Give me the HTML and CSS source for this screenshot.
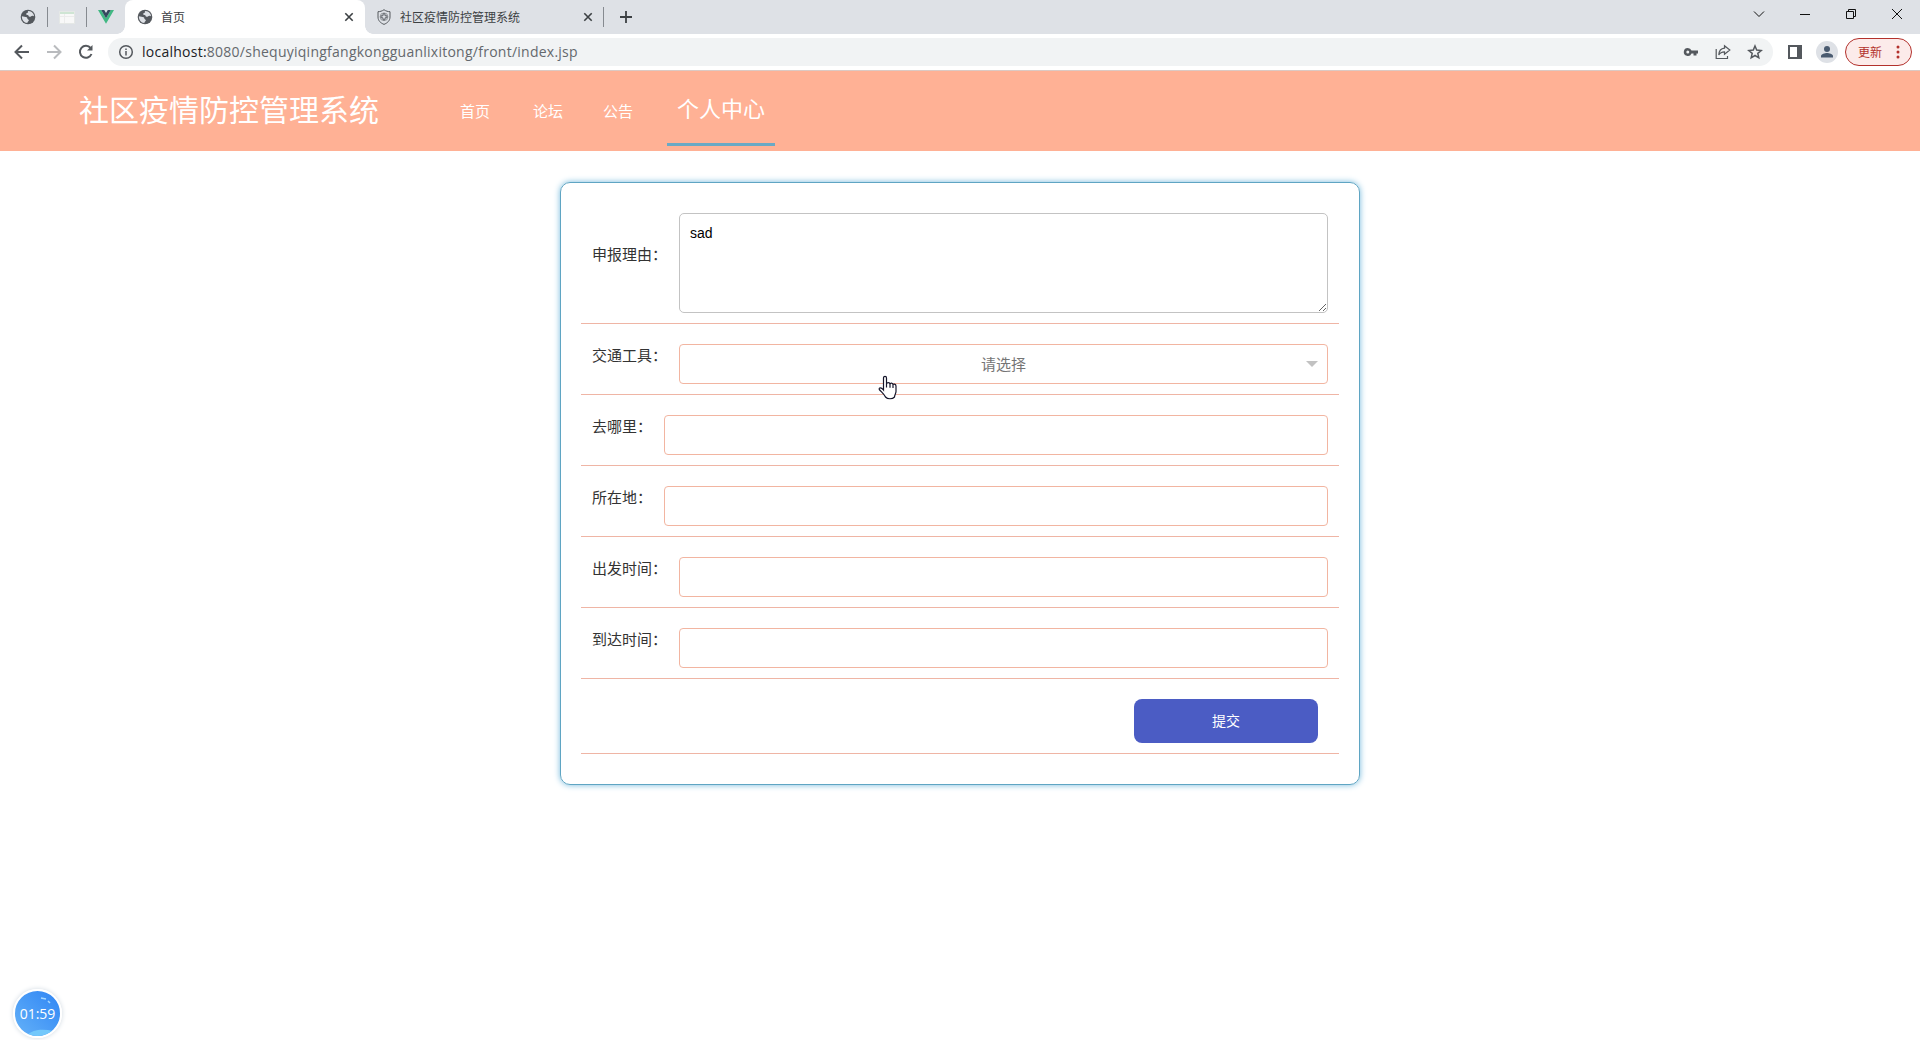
FILE: index.html
```
<!DOCTYPE html>
<html lang="zh">

<head>
    <meta charset="utf-8">
    <meta name="viewport" content="width=device-width, initial-scale=1" />
    <title>首页</title>
    <link rel="stylesheet" href="styles.css">
</head>

<body>
    <svg class="defs">
        <symbol id="globe" viewBox="0 0 16 16">
            <circle cx="8" cy="8" r="7.3" fill="#54585d" />
            <path d="M7.6 2.2C9 3 7.4 4 6.3 4.4 5.7 5 6.4 5.8 7.6 5.9 9 6 8.2 7.6 9.6 7.8 11 8 11.3 6.6 12.8 6.8L14 7.2C14 4.4 11.6 2 8.6 1.9ZM1.9 7.2C3.4 7.7 5.6 7.6 6.7 8.3 7.8 9 6.9 10 8.2 10.5 9.2 10.9 9 12 8 12.4L7.2 14C4.2 13.8 1.8 11 1.9 7.2Z" fill="#dee1e6" />
        </symbol>
        <symbol id="close" viewBox="0 0 10 10">
            <path d="M1.3 1.3L8.7 8.7M8.7 1.3L1.3 8.7" stroke="#3c4043" stroke-width="1.6" />
        </symbol>
    </svg>

    <!-- tabs -->
    <div class="tabs">
        <div class="pin"><svg width="16" height="16"><use href="#globe" /></svg></div>
        <div class="line"></div>
        <div class="pin">
            <svg width="16" height="13" viewBox="0 0 16 13">
                <rect x=".5" y=".5" width="15" height="12" fill="#f8f8f8" stroke="#e5e8e6" />
                <path d="M1 2H15" stroke="#cfe5d4" stroke-width="2" />
                <path d="M1 5.5H15M5.5 3V12" stroke="#ececec" />
            </svg>
        </div>
        <div class="line"></div>
        <div class="pin">
            <svg width="16" height="14" viewBox="0 0 16 14">
                <path d="M0 0H3.2L8 8.3 12.8 0H16L8 13.8Z" fill="#41b883" />
                <path d="M3.2 0H6.2L8 3.1 9.8 0H12.8L8 8.3Z" fill="#35495e" />
            </svg>
        </div>
        <div class="tab active">
            <svg width="16" height="16"><use href="#globe" /></svg>
            <span>首页</span>
            <svg class="close" width="10" height="10"><use href="#close" /></svg>
        </div>
        <div class="tab">
            <svg width="16" height="16" viewBox="0 0 16 16" fill="none" stroke="#54585d">
                <path d="M8 .7C10 2.2 12 2.6 14 2.7V8C14 11.8 11.3 14 8 15.4 4.7 14 2 11.8 2 8V2.7C4 2.6 6 2.2 8 .7Z" />
                <path d="M7 4.8H9V6.8H11V8.8H9V10.8H7V8.8H5V6.8H7Z" stroke-width=".9" />
                <circle cx="8" cy="7.8" r="3.9" stroke-width=".5" />
            </svg>
            <span>社区疫情防控管理系统</span>
            <svg class="close" width="10" height="10"><use href="#close" /></svg>
        </div>
        <div class="line"></div>
        <svg class="plus" width="12" height="12" viewBox="0 0 12 12"><path d="M6 0V12M0 6H12" stroke="#3c4043" stroke-width="1.8" /></svg>
        <div class="win">
            <svg width="12" height="12" viewBox="0 0 12 12"><path d="M1 3.5L6 8.5 11 3.5" /></svg>
            <svg width="12" height="12" viewBox="0 0 12 12"><path d="M1 6.5H11" /></svg>
            <svg width="12" height="12" viewBox="0 0 12 12"><path d="M1.5 3.5H8.5V10.5H1.5ZM3.5 3.5V1.5H10.5V8.5H8.5" /></svg>
            <svg width="12" height="12" viewBox="0 0 12 12"><path d="M1 1L11 11M11 1L1 11" /></svg>
        </div>
    </div>

    <!-- address bar -->
    <div class="bar">
        <div class="btns">
            <svg width="16" height="16" viewBox="0 0 16 16" stroke="#54585d"><path d="M15 8H2M8 1.5L1.5 8 8 14.5" /></svg>
            <svg width="16" height="16" viewBox="0 0 16 16" stroke="#b9bbbe"><path d="M1 8H14M8 1.5L14.5 8 8 14.5" /></svg>
            <svg width="16" height="16" viewBox="0 0 16 16" stroke="#54585d"><path d="M13.5 10A6 6 0 1 1 12.6 4" /><path d="M14.5 1V6.5H9Z" fill="#54585d" stroke="none" /></svg>
        </div>
        <div class="url">
            <svg width="16" height="16" viewBox="0 0 16 16" fill="none" stroke="#54585d" stroke-width="1.5">
                <circle cx="8" cy="8" r="6.3" />
                <path d="M8 7V11.5M8 4.5V6" />
            </svg>
            <p><b>localhost:</b>8080/shequyiqingfangkongguanlixitong/front/index.jsp</p>
            <div class="urlIcons">
                <svg width="16" height="16" viewBox="0 0 16 16"><path fill-rule="evenodd" d="M4.8 4A4 4 0 1 0 8.5 9.5H10.5V11.5H13.5V9.5H15V6.5H8.5A4 4 0 0 0 4.8 4ZM4.8 6.5A1.5 1.5 0 1 1 4.8 9.5 1.5 1.5 0 0 1 4.8 6.5Z" fill="#54585d" /></svg>
                <svg width="16" height="16" viewBox="0 0 16 16" fill="none" stroke="#54585d" stroke-width="1.2"><path d="M1.2 5V14.5H12.5V12" /><path d="M9.5 1.8L14.8 6 9.5 10.2V7.8C7 7.8 5 8.7 3.8 11 4 7 6 4.5 9.5 4.2Z" /></svg>
                <svg width="16" height="16" viewBox="0 0 16 16" fill="none" stroke="#54585d" stroke-width="1.5"><path d="M8 2L9.7 6.1 14.2 6.5 10.8 9.4 11.8 13.8 8 11.5 4.2 13.8 5.2 9.4 1.8 6.5 6.3 6.1Z" /></svg>
            </div>
        </div>
        <svg class="side" width="14" height="14" viewBox="0 0 14 14"><path d="M1 1H13V13H1Z" fill="#fff" stroke="#54585d" stroke-width="2" /><path d="M9 1H13V13H9Z" fill="#54585d" /></svg>
        <div class="user">
            <svg width="14" height="14" viewBox="0 0 14 14" fill="#4a5b70"><circle cx="7" cy="4" r="3" /><path d="M1 12.5V11C1 9 5 8 7 8S13 9 13 11V12.5Z" /></svg>
        </div>
        <div class="update">
            <span>更新</span>
            <svg width="4" height="14" viewBox="0 0 4 14" fill="#b3312c"><circle cx="2" cy="2" r="1.5" /><circle cx="2" cy="7" r="1.5" /><circle cx="2" cy="12" r="1.5" /></svg>
        </div>
    </div>

    <!-- nav -->
    <div class="header">
        <h1>社区疫情防控管理系统</h1>
        <a href="#">首页</a>
        <a href="#">论坛</a>
        <a href="#">公告</a>
        <a class="this" href="#">个人中心</a>
    </div>

    <form class="box">
        <div class="row rowArea">
            <label>申报理由：</label>
            <textarea>sad</textarea>
        </div>
        <div class="row">
            <label>交通工具：</label>
            <div class="select">请选择</div>
        </div>
        <div class="row">
            <label>去哪里：</label>
            <input type="text">
        </div>
        <div class="row">
            <label>所在地：</label>
            <input type="text">
        </div>
        <div class="row">
            <label>出发时间：</label>
            <input type="text">
        </div>
        <div class="row">
            <label>到达时间：</label>
            <input type="text">
        </div>
        <div class="row rowBtn">
            <button type="button">提交</button>
        </div>
    </form>

    <!-- mouse pointer -->
    <svg class="hand" width="20" height="26" viewBox="0 0 20 26">
        <path d="M5.5 15V3C5.5 .7 8.5 .7 8.5 3V9.5C8.5 7 12 7 12 9.5 12 7.5 15 7.8 15 10 15 8.5 18 8.8 18 11V16.5C18 18.5 16.5 20 16.5 22 14.5 24.3 9.5 24.3 7.5 22 6.5 19.5 3.5 17 1.3 14.5 .7 12.5 3 11.8 5.5 15ZM8.5 9V12.5M12 9.5V12.8M15 10V13" fill="#fff" stroke="#15152a" stroke-width="1.2" />
    </svg>

    <!-- recording time -->
    <div class="timer">
        <span>01:59</span>
        <svg width="45" height="45" viewBox="0 0 45 45">
            <path d="M11 45C18 38 28 38 38 40L34 45Z" fill="#72c8fb" />
            <path d="M26 7L31 8M33 10L35 12" stroke="#a6d8ff" stroke-width="1.5" />
        </svg>
    </div>
</body>

</html>
```
FILE: styles.css
```
* {
    box-sizing: border-box;
}

body {
    margin: 0;
    height: 1040px;
    overflow: hidden;
    background: #fff;
    color: #333;
    font-family: "Open Sans", "Noto Sans CJK SC", sans-serif;
}

svg {
    display: block;
    flex: none;
}

.defs {
    position: absolute;
    width: 0;
    height: 0;
}

/* tabs */
.tabs {
    display: flex;
    align-items: center;
    height: 34px;
    padding-left: 8px;
    background: #dee1e6;
}

.pin {
    display: flex;
    justify-content: center;
    width: 39px;
}

.line {
    width: 1px;
    height: 20px;
    background: #868a90;
}

.line + .pin {
    width: 38px;
}

.tab {
    display: flex;
    align-items: center;
    position: relative;
    width: 238px;
    height: 34px;
    padding: 0 10px 0 11px;
    font-size: 12px;
    color: #3c4043;
}

.tab span {
    flex: 1;
    margin-left: 8px;
}

.active {
    width: 240px;
    padding: 0 11px 0 12px;
    background: #fff;
    border-radius: 8px 8px 0 0;
}

.active::before,
.active::after {
    content: "";
    position: absolute;
    bottom: 0;
    left: -8px;
    width: 8px;
    height: 8px;
    background: radial-gradient(circle at 0 0, #dee1e6 7.5px, #fff 8px);
}

.active::after {
    left: 240px;
    background: radial-gradient(circle at 8px 0, #dee1e6 7.5px, #fff 8px);
}

.plus {
    margin-left: 16px;
}

.win {
    display: flex;
    gap: 34px;
    margin: 0 17px 6px auto;
    fill: none;
    stroke: #111;
}

/* address bar */
.bar {
    display: flex;
    align-items: center;
    height: 37px;
    padding: 0 8px 1px 14px;
    border-bottom: 1px solid #dcc9c3;
}

.btns {
    display: flex;
    gap: 16px;
    width: 94px;
    fill: none;
    stroke-width: 2;
}

.url {
    display: flex;
    align-items: center;
    width: 1665px;
    height: 28px;
    padding: 0 10px;
    border-radius: 14px;
    background: #f1f3f4;
}

.url p {
    flex: 1;
    margin: 0 0 0 8px;
    font-size: 14px;
    letter-spacing: .25px;
    color: #64686d;
}

.url b {
    font-weight: normal;
    color: #202124;
}

.urlIcons {
    display: flex;
    gap: 16px;
}

.side {
    margin-left: 15px;
}

.user {
    display: flex;
    align-items: center;
    justify-content: center;
    width: 22px;
    height: 22px;
    margin: 0 7px 0 14px;
    border-radius: 50%;
    background: #dee1e6;
}

.update {
    display: flex;
    align-items: center;
    justify-content: space-between;
    width: 67px;
    height: 28px;
    padding: 0 11px 0 12px;
    border: 1px solid #b3312c;
    border-radius: 14px;
    background: #fcebea;
    color: #b3312c;
    font-size: 12px;
}

/* nav */
.header {
    display: flex;
    height: 80px;
    padding-left: 79px;
    background: #ffb195;
    line-height: 80px;
}

.header h1 {
    width: 381px;
    margin: 0;
    font-size: 30px;
    font-weight: normal;
    line-height: 78px;
    color: #fff;
}

.header a {
    margin-right: 43px;
    font-size: 15px;
    color: #fff;
    text-decoration: none;
}

.header a:nth-of-type(3) {
    margin: 0 34px 0 -3px;
}

.header .this {
    height: 75px;
    margin: 0;
    padding: 0 10px;
    border-bottom: 3px solid #6aa9c5;
    font-size: 22px;
    line-height: 74px;
}

/* form */
.box {
    width: 800px;
    margin: 31px auto 0;
    padding: 20px;
    border: 1px solid #5fa5c3;
    border-radius: 10px;
    box-shadow: 0 0 6px #74b9dc;
}

.row {
    display: flex;
    margin-bottom: 10px;
    padding: 10px 11px;
    border-bottom: 1px solid #efb5a5;
}

.row label {
    margin-right: 12px;
    font-size: 15px;
    line-height: 22px;
}

.rowArea label {
    padding-top: 30px;
}

.row input,
.select {
    flex: 1;
    height: 40px;
    border: 1px solid #f2b5a1;
    border-radius: 4px;
    background: #fff;
}

.row textarea {
    flex: 1;
    height: 100px;
    padding: 11px 10px;
    border: 1px solid #c3c3c3;
    border-radius: 5px;
    font: 14px "Liberation Sans", sans-serif;
    color: #000;
    outline: none;
}

.select {
    position: relative;
    font-size: 15px;
    line-height: 38px;
    color: #757575;
    text-align: center;
}

.select::after {
    content: "";
    position: absolute;
    top: 16px;
    right: 9px;
    border: 6px solid transparent;
    border-top-color: #c2c2c2;
    border-bottom: 0;
}

.rowBtn {
    justify-content: flex-end;
}

.rowBtn button {
    width: 184px;
    height: 44px;
    margin-right: 10px;
    padding-bottom: 3px;
    border: 0;
    border-radius: 8px;
    background: #4b5cc4;
    color: #fff;
    font: 14px "Noto Sans CJK SC", sans-serif;
}

.hand {
    position: absolute;
    left: 878px;
    top: 375px;
}

.timer {
    position: absolute;
    left: 13px;
    top: 989px;
    width: 49px;
    height: 49px;
    border: 2px solid #fff;
    border-radius: 50%;
    background: linear-gradient(45deg, #64b2f8, #2f85f4);
    box-shadow: 0 0 5px #cfd8e0;
    overflow: hidden;
}

.timer span {
    position: absolute;
    width: 100%;
    color: #fff;
    font-size: 14px;
    line-height: 46px;
    text-align: center;
    z-index: 1;
}
```
